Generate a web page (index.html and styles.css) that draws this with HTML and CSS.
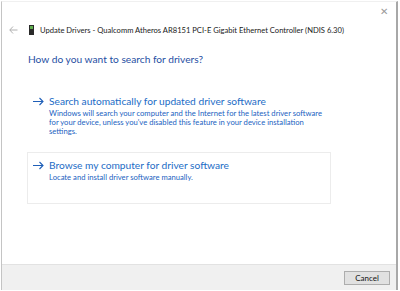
FILE: index.html
```html
<!DOCTYPE html>
<html lang="en">
<head>
    <meta charset="UTF-8">
    <title>Update Drivers</title>
    <link rel="stylesheet" href="styles.css">
</head>
<body>
    <div class="dialog">
        <div class="titlebar">
            <span class="close">&#x2715;</span>
        </div>
        <div class="header">
            <svg class="back" width="9" height="8" viewBox="0 0 9 8">
                <path d="M4 0.5 L0.8 4 L4 7.5 M0.8 4 H8.5" fill="none" stroke="#b0b0b0" stroke-width="1"/>
            </svg>
            <svg class="device" width="5" height="10" viewBox="0 0 5 10">
                <rect x="0" y="0" width="5" height="10" fill="#2a2a2a"/>
                <rect x="1" y="1" width="3" height="3" fill="#5fae4e"/>
            </svg>
            <span class="caption">Update Drivers - Qualcomm Atheros AR8151 PCI-E Gigabit Ethernet Controller (NDIS 6.30)</span>
        </div>
        <div class="content">
            <h1 class="question">How do you want to search for drivers?</h1>
            <div class="option">
                <svg class="arrow" width="11" height="9" viewBox="0 0 11 9">
                    <path d="M0 4.5 H10 M6.5 1 L10 4.5 L6.5 8" fill="none" stroke="#1f5fb8" stroke-width="1.1"/>
                </svg>
                <div class="option-text">
                    <div class="option-title">Search automatically for updated driver software</div>
                    <div class="option-desc">Windows will search your computer and the Internet for the latest driver software for your device, unless you've disabled this feature in your device installation settings.</div>
                </div>
            </div>
            <div class="option selected">
                <svg class="arrow" width="11" height="9" viewBox="0 0 11 9">
                    <path d="M0 4.5 H10 M6.5 1 L10 4.5 L6.5 8" fill="none" stroke="#1f5fb8" stroke-width="1.1"/>
                </svg>
                <div class="option-text">
                    <div class="option-title">Browse my computer for driver software</div>
                    <div class="option-desc">Locate and install driver software manually.</div>
                </div>
            </div>
        </div>
        <div class="footer">
            <button class="cancel">Cancel</button>
        </div>
    </div>
</body>
</html>
```

FILE: styles.css
```css
body {
    margin: 0;
    background: #fff;
    font-family: Lato, "Open Sans", sans-serif;
}

.dialog {
    width: 394px;
    height: 288px;
    margin: 1px 0 0 1px;
    border-left: 1px solid #c4c4c4;
    border-right: 2px solid #a8a8a8;
    border-top: 1px solid #f0f0f0;
    display: flex;
    flex-direction: column;
    background: #fff;
}

.titlebar {
    height: 18px;
    display: flex;
    justify-content: flex-end;
    align-items: center;
}

.close {
    font-size: 10px;
    color: #9a9a9a;
    margin-right: 8px;
    line-height: 1;
}

.header {
    display: flex;
    align-items: center;
    height: 20px;
    padding-left: 7px;
}

.back {
    margin-right: 11px;
}

.device {
    margin-right: 6px;
}

.caption {
    font-size: 7.6px;
    color: #1a1a1a;
    white-space: nowrap;
}

.content {
    flex: 1;
    padding: 13px 0 0 25px;
}

.question {
    margin: 0 0 24px 1px;
    font-size: 10.2px;
    font-weight: normal;
    color: #1f4fa3;
}

.option {
    display: flex;
    width: 297px;
    padding: 5px 0 8px 5px;
    border: 1px solid transparent;
    margin-bottom: 7px;
}

.option.selected {
    border-color: #ececec;
    height: 36px;
    padding-top: 6px;
}

.arrow {
    margin-top: 2px;
    margin-right: 5px;
    flex: none;
}

.option-title {
    font-size: 10.2px;
    color: #1c6cc6;
    line-height: 12px;
}

.option-desc {
    font-size: 7.65px;
    color: #1a5fbf;
    line-height: 9px;
    margin-top: 2px;
    width: 276px;
}

.footer {
    height: 25px;
    background: #f0f0f0;
    border-top: 1px solid #e2e2e2;
    display: flex;
    justify-content: flex-end;
    align-items: center;
    padding-right: 6px;
}

.cancel {
    width: 46px;
    height: 14px;
    padding: 0;
    font-family: Lato, "Open Sans", sans-serif;
    font-size: 8px;
    color: #111;
    background: #e1e1e1;
    border: 1px solid #adadad;
    border-radius: 0;
}
```
